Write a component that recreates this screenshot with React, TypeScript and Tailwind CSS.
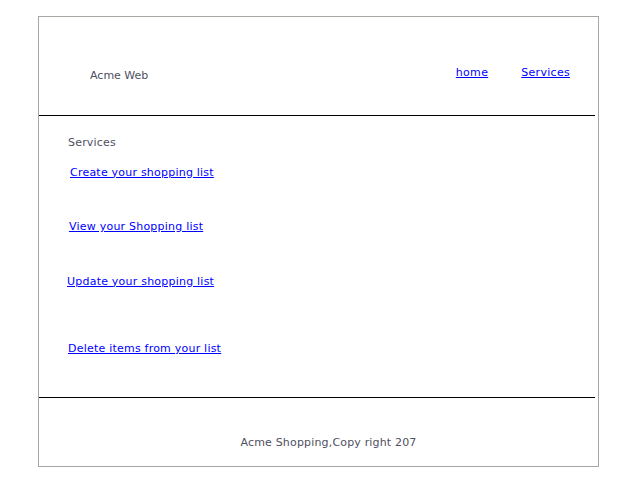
import React from 'react';

const links = [
  { label: 'Create your shopping list', pad: 'pl-[31px] pt-[13px]' },
  { label: 'View your Shopping list', pad: 'pl-[30px] pt-[38px]' },
  { label: 'Update your shopping list', pad: 'pl-[28px] pt-[38px]' },
  { label: 'Delete items from your list', pad: 'pl-[29px] pt-[51px]' },
];

const App: React.FC = () => {
  return (
    <div className="w-[640px] h-[480px] bg-white pt-4 pl-[38px] font-['DejaVu_Sans',sans-serif] text-[11px] text-[#4f4f5f]">
      <div className="w-[561px] h-[451px] border border-[#a9a6a2] flex flex-col">
        <header className="h-[99px] w-[556px] border-b border-black flex items-center justify-between shrink-0">
          <span className="pl-[51px] pt-5">Acme Web</span>
          <nav className="flex gap-[33px] pr-[25px] pt-[14px] tracking-[0.3px]">
            <a href="#" className="text-[#0000ff] underline">home</a>
            <a href="#" className="text-[#0000ff] underline">Services</a>
          </nav>
        </header>
        <main className="h-[282px] w-[556px] border-b border-black shrink-0 pt-[19px]">
          <p className="pl-[29px] tracking-[0.2px]">Services</p>
          {links.map((l) => (
            <div key={l.label} className={l.pad + ' tracking-[0.22px]'}>
              <a href="#" className="text-[#0000ff] underline">{l.label}</a>
            </div>
          ))}
        </main>
        <footer className="flex-1 flex items-center justify-center pl-5 pt-[22px] tracking-[0.17px]">
          <span>Acme Shopping,Copy right 207</span>
        </footer>
      </div>
    </div>
  );
};

export default App;
